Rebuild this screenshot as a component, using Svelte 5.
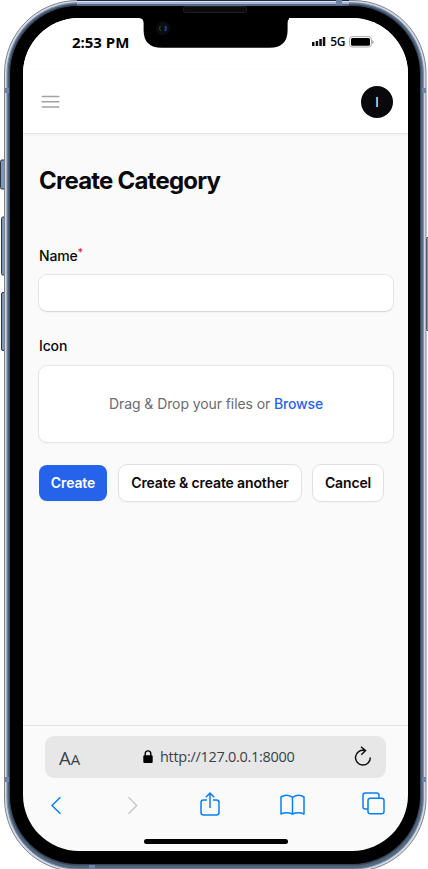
<script>
  let name = $state('');
</script>

<div class="device">
  <svg class="frame" width="428" height="869" viewBox="0 0 428 869" aria-hidden="true">
    <g fill="#8396af" stroke="#26344a" stroke-width="1">
      <rect x=".5" y="160" width="7" height="29" rx="1.5" />
      <rect x="1.5" y="217" width="6" height="58" rx="1.5" />
      <rect x="1.5" y="292.500" width="6" height="58" rx="1.5" />
      <rect x="426.500" y="237.500" width="5" height="93" rx="1" />
    </g>
    <rect x="4.500" y=".5" width="421.500" height="871" rx="73" fill="#d3d8e4" stroke="#7c8595" />
    <rect x="7" y="2.800" width="416.400" height="866.200" rx="71" fill="#53677e" stroke="#8290a5" stroke-width="1" />
    <rect x="8.800" y="4.500" width="412.200" height="861" rx="69" fill="#35475b" />
    <rect x="10" y="6" width="410" height="858" rx="68" />
    <path d="M77 .5H349" stroke="#202b49" />
    <path d="M77 1.500H349" stroke="#dce3ef" />
    <path d="M77 3H349" stroke="#a8b4cc" stroke-width="2" />
    <path d="M77 5H349" stroke="#576b8c" stroke-width="2" />
    <g fill="#7083a4">
      <rect x="5" y="88" width="4" height="5" />
      <rect x="422" y="88" width="4" height="5" />
      <rect x="5" y="777" width="4" height="5" />
      <rect x="422" y="777" width="4" height="5" />
      <rect x="336" y="0" width="6" height="5" />
      <rect x="89" y="865" width="6" height="4" />
    </g>
  </svg>

  <main class="screen">
    <div class="status">
      <time>2:53 PM</time>
      <div class="signal">
        <svg width="14" height="9" viewBox="0 0 14 9"><path d="M0 5h2.500v4H0zM3.700 4h2.500v5H3.700zM7.300 2h2.500v7H7.300zM10.800 0h2.500v9h-2.500z" fill="#111" /></svg>
        <span>5G</span>
        <svg class="battery" width="25" height="12" viewBox="0 0 25 12"><rect x=".6" y=".6" width="21.800" height="10.400" rx="2.500" fill="#fff" stroke="#aaa" /><rect x="2" y="2" width="19" height="7.700" rx="1.500" /><path d="M23.200 4c2 .7 2 3.300 0 4z" fill="#aaa" /></svg>
      </div>
    </div>
    <header>
      <svg width="20" height="16" viewBox="0 0 20 16" fill="none" stroke="#a1a1aa" stroke-width="1.400" stroke-linecap="round"><path d="M1.200 2.500h16.600M1.200 7.800h16.600M1.200 13h16.600" /></svg>
      <div class="avatar">I</div>
    </header>
    <section class="content">
      <h1>Create Category</h1>
      <label for="name">Name<sup>*</sup></label>
      <input id="name" bind:value={name} />
      <div class="label">Icon</div>
      <div class="drop"><span>Drag &amp; Drop your files or <b>Browse</b></span></div>
      <div class="actions">
        <button class="primary">Create</button>
        <button class="another">Create &amp; create another</button>
        <button class="cancel">Cancel</button>
      </div>
    </section>
    <footer>
      <div class="address">
        <span class="aa">A<small>A</small></span>
        <div class="url">
          <svg width="10" height="13" viewBox="0 0 10 13"><rect x=".3" y="5.300" width="9.400" height="7.700" rx="1.300" /><path d="M2.200 6V3.700C2.200-.1 7.800-.1 7.800 3.700V6" fill="none" stroke="#000" stroke-width="1.400" /></svg>
          <span>http://127.0.0.1:8000</span>
        </div>
        <svg class="reload" width="18" height="20" viewBox="0 0 18 20" fill="none" stroke="#111" stroke-width="1.500"><path d="M10.500 4.400A7.400 7.400 0 1 0 16.300 11.400M7 .7l4.500 3.900-4.200 4.100" /></svg>
      </div>
      <nav>
        <svg width="12" height="19" viewBox="0 0 12 19"><path d="M10.400 1.200 2 9.500l8.400 8.300" /></svg>
        <svg class="forward" width="12" height="19" viewBox="0 0 12 19"><path d="m1.400 1.200 8.400 8.300-8.400 8.300" /></svg>
        <svg class="share" width="20" height="25" viewBox="0 0 20 25"><path d="M7 8H3.500Q1 8 1 10.500v10Q1 23 3.500 23h13q2.500 0 2.500-2.500v-10Q19 8 16.500 8H13M10 16V1.200M5.800 5.300 10 1.100l4.200 4.200" /></svg>
        <svg class="book" width="25" height="22" viewBox="0 0 25 22"><path d="M12.500 3.300Q6.500-.5 1 3v17q5.700-2.700 11.500 0 5.800-2.700 11.500 0V3Q18.500-.5 12.500 3.300zV20" /></svg>
        <svg class="tabs" width="23" height="23" viewBox="0 0 23 23"><rect x="6" y="6.300" width="16" height="15.400" rx="2.300" /><path d="M6 17H3.300Q1 17 1 14.700V3.300Q1 1 3.300 1h11.400Q17 1 17 3.300v3" /></svg>
      </nav>
      <div class="home"></div>
    </footer>
  </main>

  <svg class="notch" width="150" height="49" viewBox="0 0 150 49" aria-hidden="true">
    <path d="M0 17v1q5 0 5 5v7q0 17.800 18 17.800h108q18 0 18-17.800v-7q0-5 5-5v-1z" transform="translate(-.4 0)" />
    <rect x="44.500" y="6.500" width="63" height="6" rx="2" fill="#0b0b0b" stroke="#202020" />
    <circle cx="24" cy="28.500" r="7" fill="#0b0c0f" />
    <path d="M22 26q-3 2 0 5" stroke="#18383c" fill="none" stroke-width="1.500" />
    <path d="M26 26q2 2 0 5" stroke="#263a86" fill="none" stroke-width="2" />
  </svg>
</div>

<style>
  :global(body) { background: #fff; overflow: hidden; }
  .device { position: relative; width: 428px; height: 869px; overflow: hidden; box-sizing: border-box; padding: 18px 20px 18px 23px; font-family: Inter, sans-serif; color: #09090b; }
  .device * { box-sizing: border-box; }
  .frame { position: absolute; inset: 0; }
  .screen { position: relative; width: 385px; height: 833px; border-radius: 56px; overflow: hidden; background: #fafafa; display: flex; flex-direction: column; }
  .status { height: 52px; background: #fff; display: flex; justify-content: space-between; padding: 14px 34px 0 49px; border-bottom: 1px solid #fcfcfc; }
  time { font: 700 15px/20px "Open Sans", sans-serif; color: #000; letter-spacing: -.03px; }
  .signal { display: flex; align-items: center; height: 19px; }
  .signal span { font: 600 12px/16px "Open Sans", sans-serif; margin-left: 4px; letter-spacing: -.4px; }
  .battery { margin-left: 4px; }
  header { height: 64px; flex-shrink: 0; background: #fff; border-bottom: 1px solid #e7e7e8; box-shadow: 0 1px 2px #0000000c; padding: 0 15px 0 18px; display: flex; align-items: center; justify-content: space-between; }
  .avatar { width: 32px; height: 32px; border-radius: 50%; background: #09090b; color: #fff; font-size: 13px; line-height: 32px; text-align: center; }
  .content { flex: 1; padding: 31px 14px 0 15px; display: flex; flex-direction: column; }
  h1 { font-size: 24px; line-height: 32px; letter-spacing: -.78px; margin: 0 0 47px 1px; font-weight: 700; }
  label, .label { font-size: 14px; line-height: 24px; height: 24px; font-weight: 500; margin-left: 1px; letter-spacing: -.15px; }
  sup { color: #dc2626; font-size: 11px; line-height: 0; vertical-align: 5px; }
  input { width: 356px; height: 38px; margin: 6px 0 22px; padding: 0 12px; border: 1px solid #e4e4e5; border-bottom-color: #d9d9da; border-radius: 9px; background: #fff; box-shadow: 0 1px 1px #00000008; font: 14px Inter, sans-serif; outline: none; }
  .drop { width: 356px; height: 78px; border: 1px solid #e4e4e5; border-radius: 9px; background: #fff; box-shadow: 0 1px 1px #00000008; margin: 7px 0 21px; padding-bottom: 1px; color: #6b6b73; font-size: 14px; letter-spacing: -.09px; display: flex; align-items: center; justify-content: center; }
  .drop b { font-weight: 500; color: #2563eb; letter-spacing: -.17px; }
  .actions { display: flex; align-items: center; height: 38px; margin-left: 0; }
  button { height: 38px; padding: 0 0 1px; border: 1px solid #e1e1e3; border-radius: 9px; background: #fff; box-shadow: 0 1px 1px #00000008; color: #09090b; font: 600 14px Inter, sans-serif; letter-spacing: -.13px; white-space: nowrap; }
  .primary { width: 68px; height: 36px; border: 0; color: #fff; background: #2563eb; margin: 0 11px 0 1px; border-radius: 8px; }
  .another { width: 184px; margin-right: 10px; }
  .cancel { width: 72px; }
  footer { height: 126px; border-top: 1px solid #e2e2e2; padding: 10px 22px 0; display: flex; flex-direction: column; }
  .address { width: 341px; height: 42px; border-radius: 9px; background: #e7e7e7; padding: 0 14px; display: flex; align-items: center; justify-content: space-between; }
  .aa { font: 18.500px/24px "Open Sans", sans-serif; width: 25px; color: #3b3f4c; padding-top: 2px; white-space: nowrap; }
  .aa small { font-size: 15px; }
  .url { display: flex; align-items: center; gap: 7px; width: 154px; margin-left: 2px; }
  .url svg { position: relative; top: -1px; }
  .url span { font: 14.500px/20px "Open Sans", sans-serif; color: #3b3f4c; letter-spacing: -.3px; white-space: nowrap; }
  .reload { position: relative; top: -1px; }
  nav { height: 51px; display: flex; align-items: center; justify-content: space-between; padding: 3px 1px 0 5px; }
  nav svg { fill: none; stroke: #087ff5; stroke-width: 1.500; stroke-linejoin: round; }
  nav .forward { stroke: #c8c8c8; margin-left: 8px; }
  nav .share { margin-left: 4px; margin-top: -2px; }
  nav .book { margin-left: 3px; }
  nav .tabs { margin-top: -4px; }
  .home { width: 144px; height: 5px; border-radius: 3px; background: #000; margin: 10px 0 0 99px; }
  .notch { position: absolute; top: 0; left: 139px; }
</style>
